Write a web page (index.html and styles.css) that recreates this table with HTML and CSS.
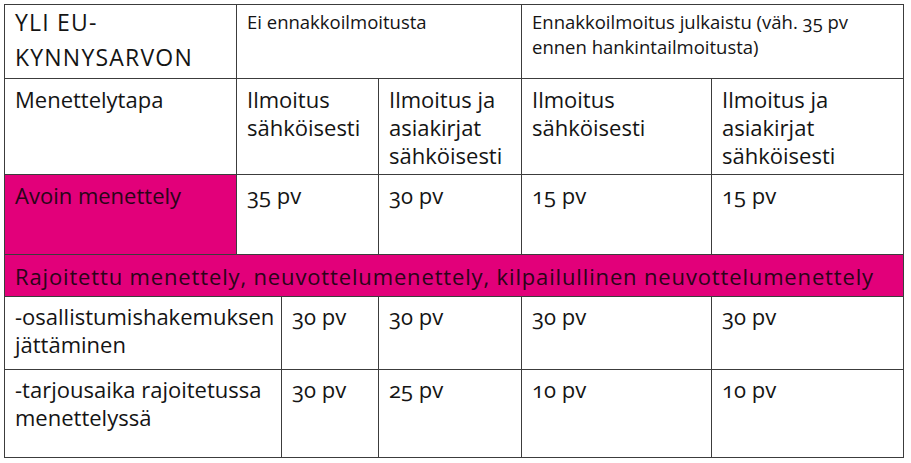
FILE: index.html
```html
<!DOCTYPE html>
<html lang="fi">
<head>
<meta charset="utf-8">
<title>Määräajat</title>
<link rel="stylesheet" href="styles.css">
</head>
<body>
<div class="page">
<table class="deadlines">
  <colgroup>
    <col class="c-a"><col class="c-b"><col class="c-c"><col class="c-d"><col class="c-e"><col class="c-f">
  </colgroup>
  <tr class="r1">
    <td class="title">YLI EU-<br>KYNNYSARVON</td>
    <td colspan="3" class="small">Ei ennakkoilmoitusta</td>
    <td colspan="2" class="small">Ennakkoilmoitus julkaistu (väh. <span class="onum">35</span> pv<br>ennen hankintailmoitusta)</td>
  </tr>
  <tr class="r2">
    <td>Menettelytapa</td>
    <td colspan="2">Ilmoitus<br>sähköisesti</td>
    <td>Ilmoitus ja<br>asiakirjat<br>sähköisesti</td>
    <td>Ilmoitus<br>sähköisesti</td>
    <td>Ilmoitus ja<br>asiakirjat<br>sähköisesti</td>
  </tr>
  <tr class="r3">
    <td class="pink">Avoin menettely</td>
    <td colspan="2" class="num">35 pv</td>
    <td class="num">30 pv</td>
    <td class="num">15 pv</td>
    <td class="num">15 pv</td>
  </tr>
  <tr class="r4">
    <td colspan="6" class="pink wide">Rajoitettu menettely, neuvottelumenettely, kilpailullinen neuvottelumenettely</td>
  </tr>
  <tr class="r5">
    <td colspan="2">-osallistumishakemuksen<br>jättäminen</td>
    <td class="num">30 pv</td>
    <td class="num">30 pv</td>
    <td class="num">30 pv</td>
    <td class="num">30 pv</td>
  </tr>
  <tr class="r6">
    <td colspan="2">-tarjousaika rajoitetussa<br>menettelyssä</td>
    <td class="num">30 pv</td>
    <td class="num">25 pv</td>
    <td class="num">10 pv</td>
    <td class="num">10 pv</td>
  </tr>
</table>
</div>
</body>
</html>
```

FILE: styles.css
```css
html, body {
  margin: 0;
  padding: 0;
  background: #ffffff;
}

.page {
  padding: 4px 0 0 4px;
}

.deadlines {
  border-collapse: collapse;
  table-layout: fixed;
  width: 899px;
  font-family: "Open Sans", "Noto Sans", sans-serif;
  font-size: 22px;
  line-height: 28px;
  color: #141414;
}

.c-a { width: 232px; }
.c-b { width: 45px; }
.c-c { width: 97px; }
.c-d { width: 143px; }
.c-e { width: 190px; }
.c-f { width: 192px; }

.deadlines td {
  box-sizing: border-box;
  border: 1px solid #3c3c3c;
  padding: 6px 4px 0 10px;
  vertical-align: top;
  white-space: nowrap;
}

.deadlines .title {
  font-size: 23px;
  line-height: 35px;
  padding-top: 0;
  letter-spacing: 1.2px;
}

.deadlines .small {
  font-size: 18.5px;
  line-height: 25px;
  padding-top: 4px;
}

.deadlines .wide {
  letter-spacing: 0.85px;
}

.deadlines .num,
.deadlines .onum {
  font-variant-numeric: oldstyle-nums;
}

.deadlines .pink {
  background: #e2007a;
  color: #2a0418;
}

.r1 td { height: 74px; }
.r2 td { height: 96px; }
.r3 td { height: 80px; }
.r4 td { height: 42px; }
.r4 td.wide { padding-top: 7px; }
.r5 td { height: 73px; }
.r5 td, .r6 td { padding-top: 5px; }
.r6 td { height: 88px; }
```
